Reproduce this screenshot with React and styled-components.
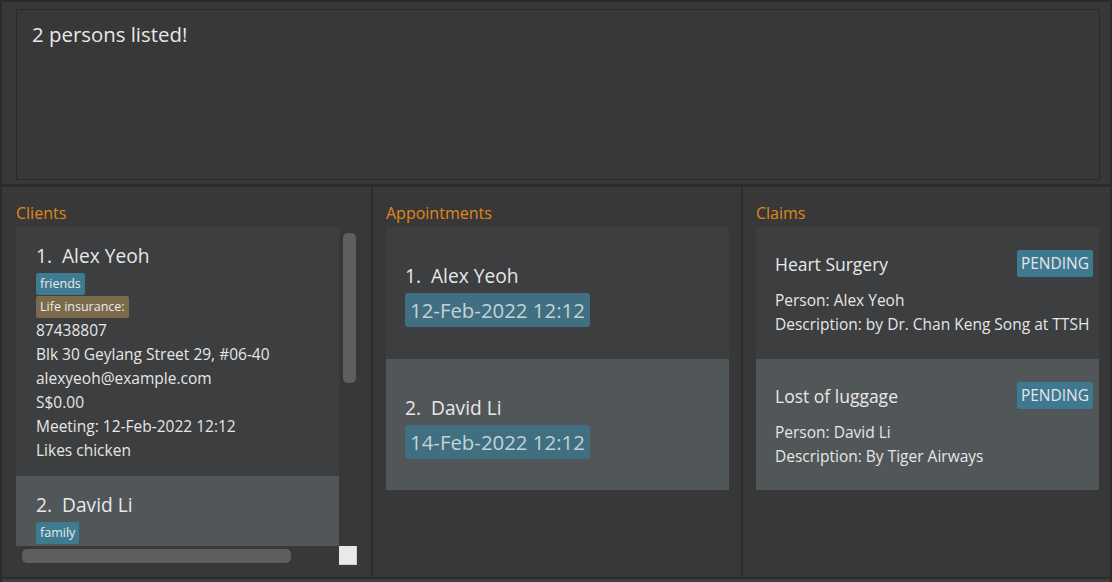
import styled, { createGlobalStyle } from "styled-components";

const GlobalStyle = createGlobalStyle`
    html, body {
        margin: 0;
        padding: 0;
        background: #383838;
    }
    * {
        box-sizing: border-box;
    }
`

const Window = styled.div`
    width: 1112px;
    height: 582px;
    display: flex;
    flex-direction: column;
    background: #383838;
    border-top: 2px solid #2b2b2b;
    border-left: 2px solid #2b2b2b;
    border-right: 2px solid #2b2b2b;
    font-family: "Open Sans", "Noto Sans", sans-serif;
    color: #e6e6e6;
    overflow: hidden;
`

const ResultArea = styled.div`
    padding: 7px 10px 4px 14px;
    border-bottom: 3px solid #2b2b2b;
`

const ResultBox = styled.div`
    height: 171px;
    border: 1px solid #2a2a2a;
    padding: 10px 15px;
    font-size: 20.4px;
    line-height: 28px;
    color: #e8e8e8;
`

const Panels = styled.div`
    flex: 1;
    display: grid;
    grid-template-columns: 369px 2px 368px 2px 1fr;
    min-height: 0;
`

const Divider = styled.div`
    background: #2b2b2b;
`

const Panel = styled.section`
    display: flex;
    flex-direction: column;
    padding: 16px ${(p) => p.$right || 12}px 0 ${(p) => p.$left || 13}px;
    min-height: 0;
`

const PanelTitle = styled.div`
    color: #e0861a;
    font-size: 16px;
    line-height: 20px;
    margin-bottom: 4px;
`

const Footer = styled.div`
    height: 5px;
    border-top: 2px solid #2b2b2b;
    background: #3d3d3d;
`

/* clients list with its scroll bars */
const ScrollFrame = styled.div`
    display: grid;
    grid-template-columns: 323px 18px;
    grid-template-rows: 319px 19px;
`

const Viewport = styled.div`
    overflow: hidden;
    display: flex;
    flex-direction: column;
`

const VTrack = styled.div`
    padding: 6px 2px 0 4px;
`

const VThumb = styled.div`
    width: 13px;
    height: 150px;
    border-radius: 5px;
    background: #5e5e5e;
`

const HTrack = styled.div`
    padding: 3px 0 0 6px;
`

const HThumb = styled.div`
    width: 269px;
    height: 14px;
    border-radius: 5px;
    background: #5e5e5e;
`

const Corner = styled.div`
    background: #e9e9e9;
    border-right: 1px solid #cfcfcf;
    border-bottom: 1px solid #cfcfcf;
`

const Card = styled.div`
    background: ${(p) => (p.$alt ? "#515658" : "#3c3e3f")};
    flex-shrink: 0;
`

const ClientCard = styled(Card)`
    padding: 14px 20px;
`

const Name = styled.div`
    font-size: 19.2px;
    line-height: 30px;
    color: #e8e8e8;
    white-space: pre;
`

const Tag = styled.div`
    display: table;
    margin-top: ${(p) => (p.$first ? "2px" : "1px")};
    padding: 0 4px;
    border-radius: 2px;
    background: ${(p) => p.$bg || "#3e7b91"};
    font-size: 12.5px;
    line-height: 22px;
    color: #eaeaea;
`

const Line = styled.div`
    font-size: 15.5px;
    line-height: 24px;
    color: #e6e6e6;
    white-space: nowrap;
`

const List = styled.div`
    display: flex;
    flex-direction: column;
`

const ApptCard = styled(Card)`
    height: ${(p) => p.$h}px;
    display: flex;
    flex-direction: column;
    justify-content: center;
    align-items: flex-start;
    padding: 2px 19px 0;
`

const DateBadge = styled.div`
    margin-top: 2px;
    padding: 0 5px;
    border-radius: 3px;
    background: #3f6f80;
    color: #c3d2d8;
    font-size: 20.4px;
    line-height: 34px;
`

const ClaimCard = styled(Card)`
    height: ${(p) => p.$h}px;
    padding: 23px 6px 0 19px;
`

const ClaimHead = styled.div`
    display: flex;
    align-items: center;
    justify-content: space-between;
    height: 27px;
    margin-bottom: 11px;
`

const ClaimTitle = styled.div`
    font-size: 17.5px;
    color: #e8e8e8;
`

const Status = styled.div`
    padding: 0 4px;
    border-radius: 2px;
    background: #3e7891;
    font-size: 15.5px;
    line-height: 27px;
    color: #e6e6e6;
`

const clients = [
    {
        name: "1.  Alex Yeoh",
        tags: [
            { text: "friends" },
            { text: "Life insurance:", bg: "#7b6a4b" },
        ],
        lines: [
            "87438807",
            "Blk 30 Geylang Street 29, #06-40",
            "alexyeoh@example.com",
            "S$0.00",
            "Meeting: 12-Feb-2022 12:12",
            "Likes chicken",
        ],
    },
    {
        name: "2.  David Li",
        tags: [{ text: "family" }],
        lines: [],
    },
];

const appointments = [
    { name: "1.  Alex Yeoh", date: "12-Feb-2022 12:12", h: 132 },
    { name: "2.  David Li", date: "14-Feb-2022 12:12", h: 131 },
];

const claims = [
    { title: "Heart Surgery", person: "Alex Yeoh", desc: "by Dr. Chan Keng Song at TTSH", h: 132 },
    { title: "Lost of luggage", person: "David Li", desc: "By Tiger Airways", h: 131 },
];

function App()
{
    return(
        <>
            <GlobalStyle />
            <Window>
                <ResultArea>
                    <ResultBox>2 persons listed!</ResultBox>
                </ResultArea>
                <Panels>
                    <Panel $left={14}>
                        <PanelTitle>Clients</PanelTitle>
                        <ScrollFrame>
                            <Viewport>
                                {clients.map((c, i) => (
                                    <ClientCard key={c.name} $alt={i % 2 === 1}>
                                        <Name>{c.name}</Name>
                                        {c.tags.map((t, j) => (
                                            <Tag key={t.text} $bg={t.bg} $first={j === 0}>{t.text}</Tag>
                                        ))}
                                        {c.lines.map((l) => (
                                            <Line key={l}>{l}</Line>
                                        ))}
                                    </ClientCard>
                                ))}
                            </Viewport>
                            <VTrack><VThumb /></VTrack>
                            <HTrack><HThumb /></HTrack>
                            <Corner />
                        </ScrollFrame>
                    </Panel>
                    <Divider />
                    <Panel>
                        <PanelTitle>Appointments</PanelTitle>
                        <List>
                            {appointments.map((a, i) => (
                                <ApptCard key={a.name} $alt={i % 2 === 1} $h={a.h}>
                                    <Name>{a.name}</Name>
                                    <DateBadge>{a.date}</DateBadge>
                                </ApptCard>
                            ))}
                        </List>
                    </Panel>
                    <Divider />
                    <Panel $right={11}>
                        <PanelTitle>Claims</PanelTitle>
                        <List>
                            {claims.map((c, i) => (
                                <ClaimCard key={c.title} $alt={i % 2 === 1} $h={c.h}>
                                    <ClaimHead>
                                        <ClaimTitle>{c.title}</ClaimTitle>
                                        <Status>PENDING</Status>
                                    </ClaimHead>
                                    <Line>Person: {c.person}</Line>
                                    <Line>Description: {c.desc}</Line>
                                </ClaimCard>
                            ))}
                        </List>
                    </Panel>
                </Panels>
                <Footer />
            </Window>
        </>
    )
}
export default App;
